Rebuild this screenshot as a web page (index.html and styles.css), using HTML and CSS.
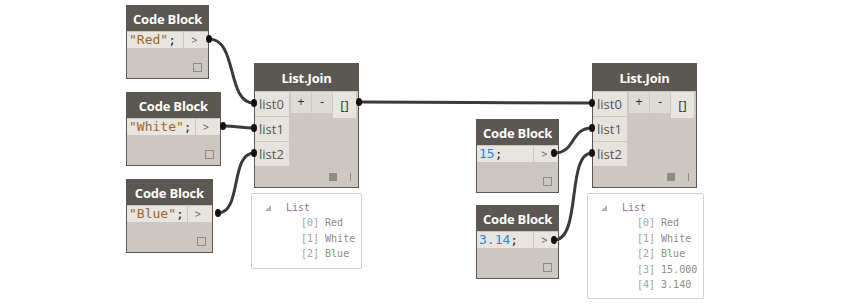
FILE: index.html
```html
<!DOCTYPE html>
<html lang="en">
<head>
    <meta charset="UTF-8">
    <title>List.Join graph</title>
    <link rel="stylesheet" href="styles.css">
</head>
<body>
    <div class="canvas">

        <!-- left group -->
        <div class="node code n-red">
            <div class="node-head">Code Block</div>
            <div class="code-row">
                <div class="code-cell"><span class="str">"Red"</span>;</div>
                <div class="out-cell">&gt;</div>
            </div>
            <div class="code-foot"><span class="preview-box"></span></div>
        </div>

        <div class="node code n-white">
            <div class="node-head">Code Block</div>
            <div class="code-row">
                <div class="code-cell"><span class="str">"White"</span>;</div>
                <div class="out-cell">&gt;</div>
            </div>
            <div class="code-foot"><span class="preview-box"></span></div>
        </div>

        <div class="node code n-blue">
            <div class="node-head">Code Block</div>
            <div class="code-row">
                <div class="code-cell"><span class="str">"Blue"</span>;</div>
                <div class="out-cell">&gt;</div>
            </div>
            <div class="code-foot"><span class="preview-box"></span></div>
        </div>

        <div class="node join j-left">
            <div class="node-head join-head">List.Join</div>
            <div class="join-body">
                <div class="ports">
                    <div class="port">list0</div>
                    <div class="port">list1</div>
                    <div class="port">list2</div>
                </div>
                <div class="join-btns">
                    <span class="btn">+</span>
                    <span class="btn">-</span>
                    <span class="btn btn-list">[]</span>
                </div>
            </div>
            <div class="join-foot"><span class="fill-box"></span><span class="bar"></span></div>
        </div>

        <div class="watch w-left">
            <div class="watch-head"><span class="tri"></span><span class="watch-title">List</span></div>
            <div class="watch-item"><span class="idx">[0]</span> Red</div>
            <div class="watch-item"><span class="idx">[1]</span> White</div>
            <div class="watch-item"><span class="idx">[2]</span> Blue</div>
        </div>

        <!-- right group -->
        <div class="node code n-15">
            <div class="node-head">Code Block</div>
            <div class="code-row">
                <div class="code-cell"><span class="num">15</span>;</div>
                <div class="out-cell">&gt;</div>
            </div>
            <div class="code-foot"><span class="preview-box"></span></div>
        </div>

        <div class="node code n-314">
            <div class="node-head">Code Block</div>
            <div class="code-row">
                <div class="code-cell"><span class="num">3.14</span>;</div>
                <div class="out-cell">&gt;</div>
            </div>
            <div class="code-foot"><span class="preview-box"></span></div>
        </div>

        <div class="node join j-right">
            <div class="node-head join-head">List.Join</div>
            <div class="join-body">
                <div class="ports">
                    <div class="port">list0</div>
                    <div class="port">list1</div>
                    <div class="port">list2</div>
                </div>
                <div class="join-btns">
                    <span class="btn">+</span>
                    <span class="btn">-</span>
                    <span class="btn btn-list">[]</span>
                </div>
            </div>
            <div class="join-foot"><span class="fill-box"></span><span class="bar"></span></div>
        </div>

        <div class="watch w-right">
            <div class="watch-head"><span class="tri"></span><span class="watch-title">List</span></div>
            <div class="watch-item"><span class="idx">[0]</span> Red</div>
            <div class="watch-item"><span class="idx">[1]</span> White</div>
            <div class="watch-item"><span class="idx">[2]</span> Blue</div>
            <div class="watch-item"><span class="idx">[3]</span> 15.000</div>
            <div class="watch-item"><span class="idx">[4]</span> 3.140</div>
        </div>

        <!-- wires -->
        <svg class="wires" width="852" height="305" viewBox="0 0 852 305">
            <g fill="none" stroke="#3b3b3b" stroke-width="3">
                <path d="M209 39 C238 39 226 103 254 103"/>
                <path d="M223 126 C238 126 240 128 254 128"/>
                <path d="M218 213 C242 213 230 153 254 153"/>
                <path d="M359 102 C470 102 480 103 592 103"/>
                <path d="M554 153 C576 153 570 128 592 128"/>
                <path d="M554 240 C582 240 566 153 592 153"/>
            </g>
            <g fill="#111">
                <ellipse cx="209" cy="39" rx="3" ry="4"/>
                <ellipse cx="223" cy="126" rx="3" ry="4"/>
                <ellipse cx="218" cy="213" rx="3" ry="4"/>
                <ellipse cx="254" cy="103" rx="3" ry="4"/>
                <ellipse cx="254" cy="128" rx="3" ry="4"/>
                <ellipse cx="254" cy="153" rx="3" ry="4"/>
                <ellipse cx="359" cy="102" rx="3" ry="4"/>
                <ellipse cx="554" cy="153" rx="3" ry="4"/>
                <ellipse cx="554" cy="240" rx="3" ry="4"/>
                <ellipse cx="592" cy="103" rx="3" ry="4"/>
                <ellipse cx="592" cy="128" rx="3" ry="4"/>
                <ellipse cx="592" cy="153" rx="3" ry="4"/>
            </g>
        </svg>
    </div>
</body>
</html>
```

FILE: styles.css
```css
/* Reset & Base */
* {
    box-sizing: border-box;
    margin: 0;
    padding: 0;
}

body {
    background: #ffffff;
    font-family: 'Open Sans', 'Noto Sans', sans-serif;
}

/* Graph canvas */
.canvas {
    position: relative;
    width: 852px;
    height: 305px;
    overflow: hidden;
}

.wires {
    position: absolute;
    left: 0;
    top: 0;
    pointer-events: none;
}

/* Nodes */
.node {
    position: absolute;
    display: flex;
    flex-direction: column;
    background: #ccc8c1;
    border: 1px solid #5b5853;
}

.node-head {
    height: 25px;
    padding: 0 6px;
    display: flex;
    align-items: center;
    justify-content: center;
    background: #5b5853;
    color: #ffffff;
    font-size: 13px;
    font-weight: 700;
    letter-spacing: -0.2px;
    white-space: nowrap;
}

/* node places on the canvas */
.n-red   { left: 126px; top: 5px; }
.n-white { left: 126px; top: 92px; }
.n-blue  { left: 126px; top: 179px; }
.n-15    { left: 476px; top: 119px; }
.n-314   { left: 476px; top: 205px; }
.j-left  { left: 254px; top: 63px; }
.j-right { left: 592px; top: 63px; }
.w-left  { left: 251px; top: 193px; }
.w-right { left: 587px; top: 193px; }

/* Code Block */
.code {
    min-width: 78px;
    height: 74px;
}

.code-row {
    display: flex;
    height: 16px;
    margin-top: 1px;
}

.code-cell {
    flex: 1 0 auto;
    padding: 0 3px 0 2px;
    background: #e8e5e1;
    font-family: 'DejaVu Sans Mono', 'Liberation Mono', monospace;
    font-size: 13px;
    line-height: 16px;
    color: #2b2b2b;
    white-space: nowrap;
}

.str {
    color: #9c6430;
}

.num {
    color: #2f86d8;
}

.out-cell {
    flex: 0 0 24px;
    margin-left: 1px;
    padding-left: 7px;
    background: #e8e5e1;
    font-size: 11px;
    line-height: 16px;
    color: #555;
}

.code-foot {
    flex: 1;
    display: flex;
    justify-content: flex-end;
    align-items: flex-end;
    padding: 0 6px 6px 0;
}

.preview-box {
    width: 9px;
    height: 9px;
    border: 1px solid #8f8b85;
}

/* List.Join */
.join {
    width: 105px;
    height: 125px;
}

.join-head {
    height: 27px;
}

.join-body {
    display: flex;
    gap: 2px;
}

.ports {
    display: flex;
    flex-direction: column;
    gap: 1px;
    width: 34px;
    margin-top: 1px;
}

.port {
    height: 24px;
    padding-left: 4px;
    background: #e6e3df;
    font-size: 13px;
    line-height: 24px;
    color: #555;
}

.join-btns {
    display: flex;
    gap: 1px;
    margin-top: 1px;
    align-items: flex-start;
}

.btn {
    width: 20px;
    height: 21px;
    background: #dedbd6;
    text-align: center;
    font-size: 13px;
    line-height: 19px;
    color: #333;
}

.btn-list {
    width: 23px;
    height: 26px;
    background: #e8e5e1;
    line-height: 26px;
}

.join-foot {
    flex: 1;
    display: flex;
    justify-content: flex-end;
    align-items: flex-end;
    gap: 13px;
    padding: 0 7px 6px 0;
}

.fill-box {
    width: 8px;
    height: 8px;
    background: #8f8b85;
}

.bar {
    width: 1px;
    height: 8px;
    background: #8f8b85;
}

/* Watch preview */
.watch {
    position: absolute;
    padding: 6px 6px 6px 13px;
    background: #ffffff;
    border: 1px solid #cfcfcf;
    border-radius: 2px;
    font-family: 'DejaVu Sans Mono', 'Liberation Mono', monospace;
    font-size: 10px;
    line-height: 15.4px;
    color: #8c8c8c;
}

.watch-head {
    display: flex;
    align-items: center;
}

.tri {
    width: 0;
    height: 0;
    margin-right: 15px;
    border-left: 6px solid transparent;
    border-bottom: 6px solid #b0b0b0;
}

.watch-title {
    color: #9a6fa0;
}

.watch-item {
    padding-left: 36px;
    white-space: nowrap;
}

.idx {
    color: #a3a3a3;
}
```
